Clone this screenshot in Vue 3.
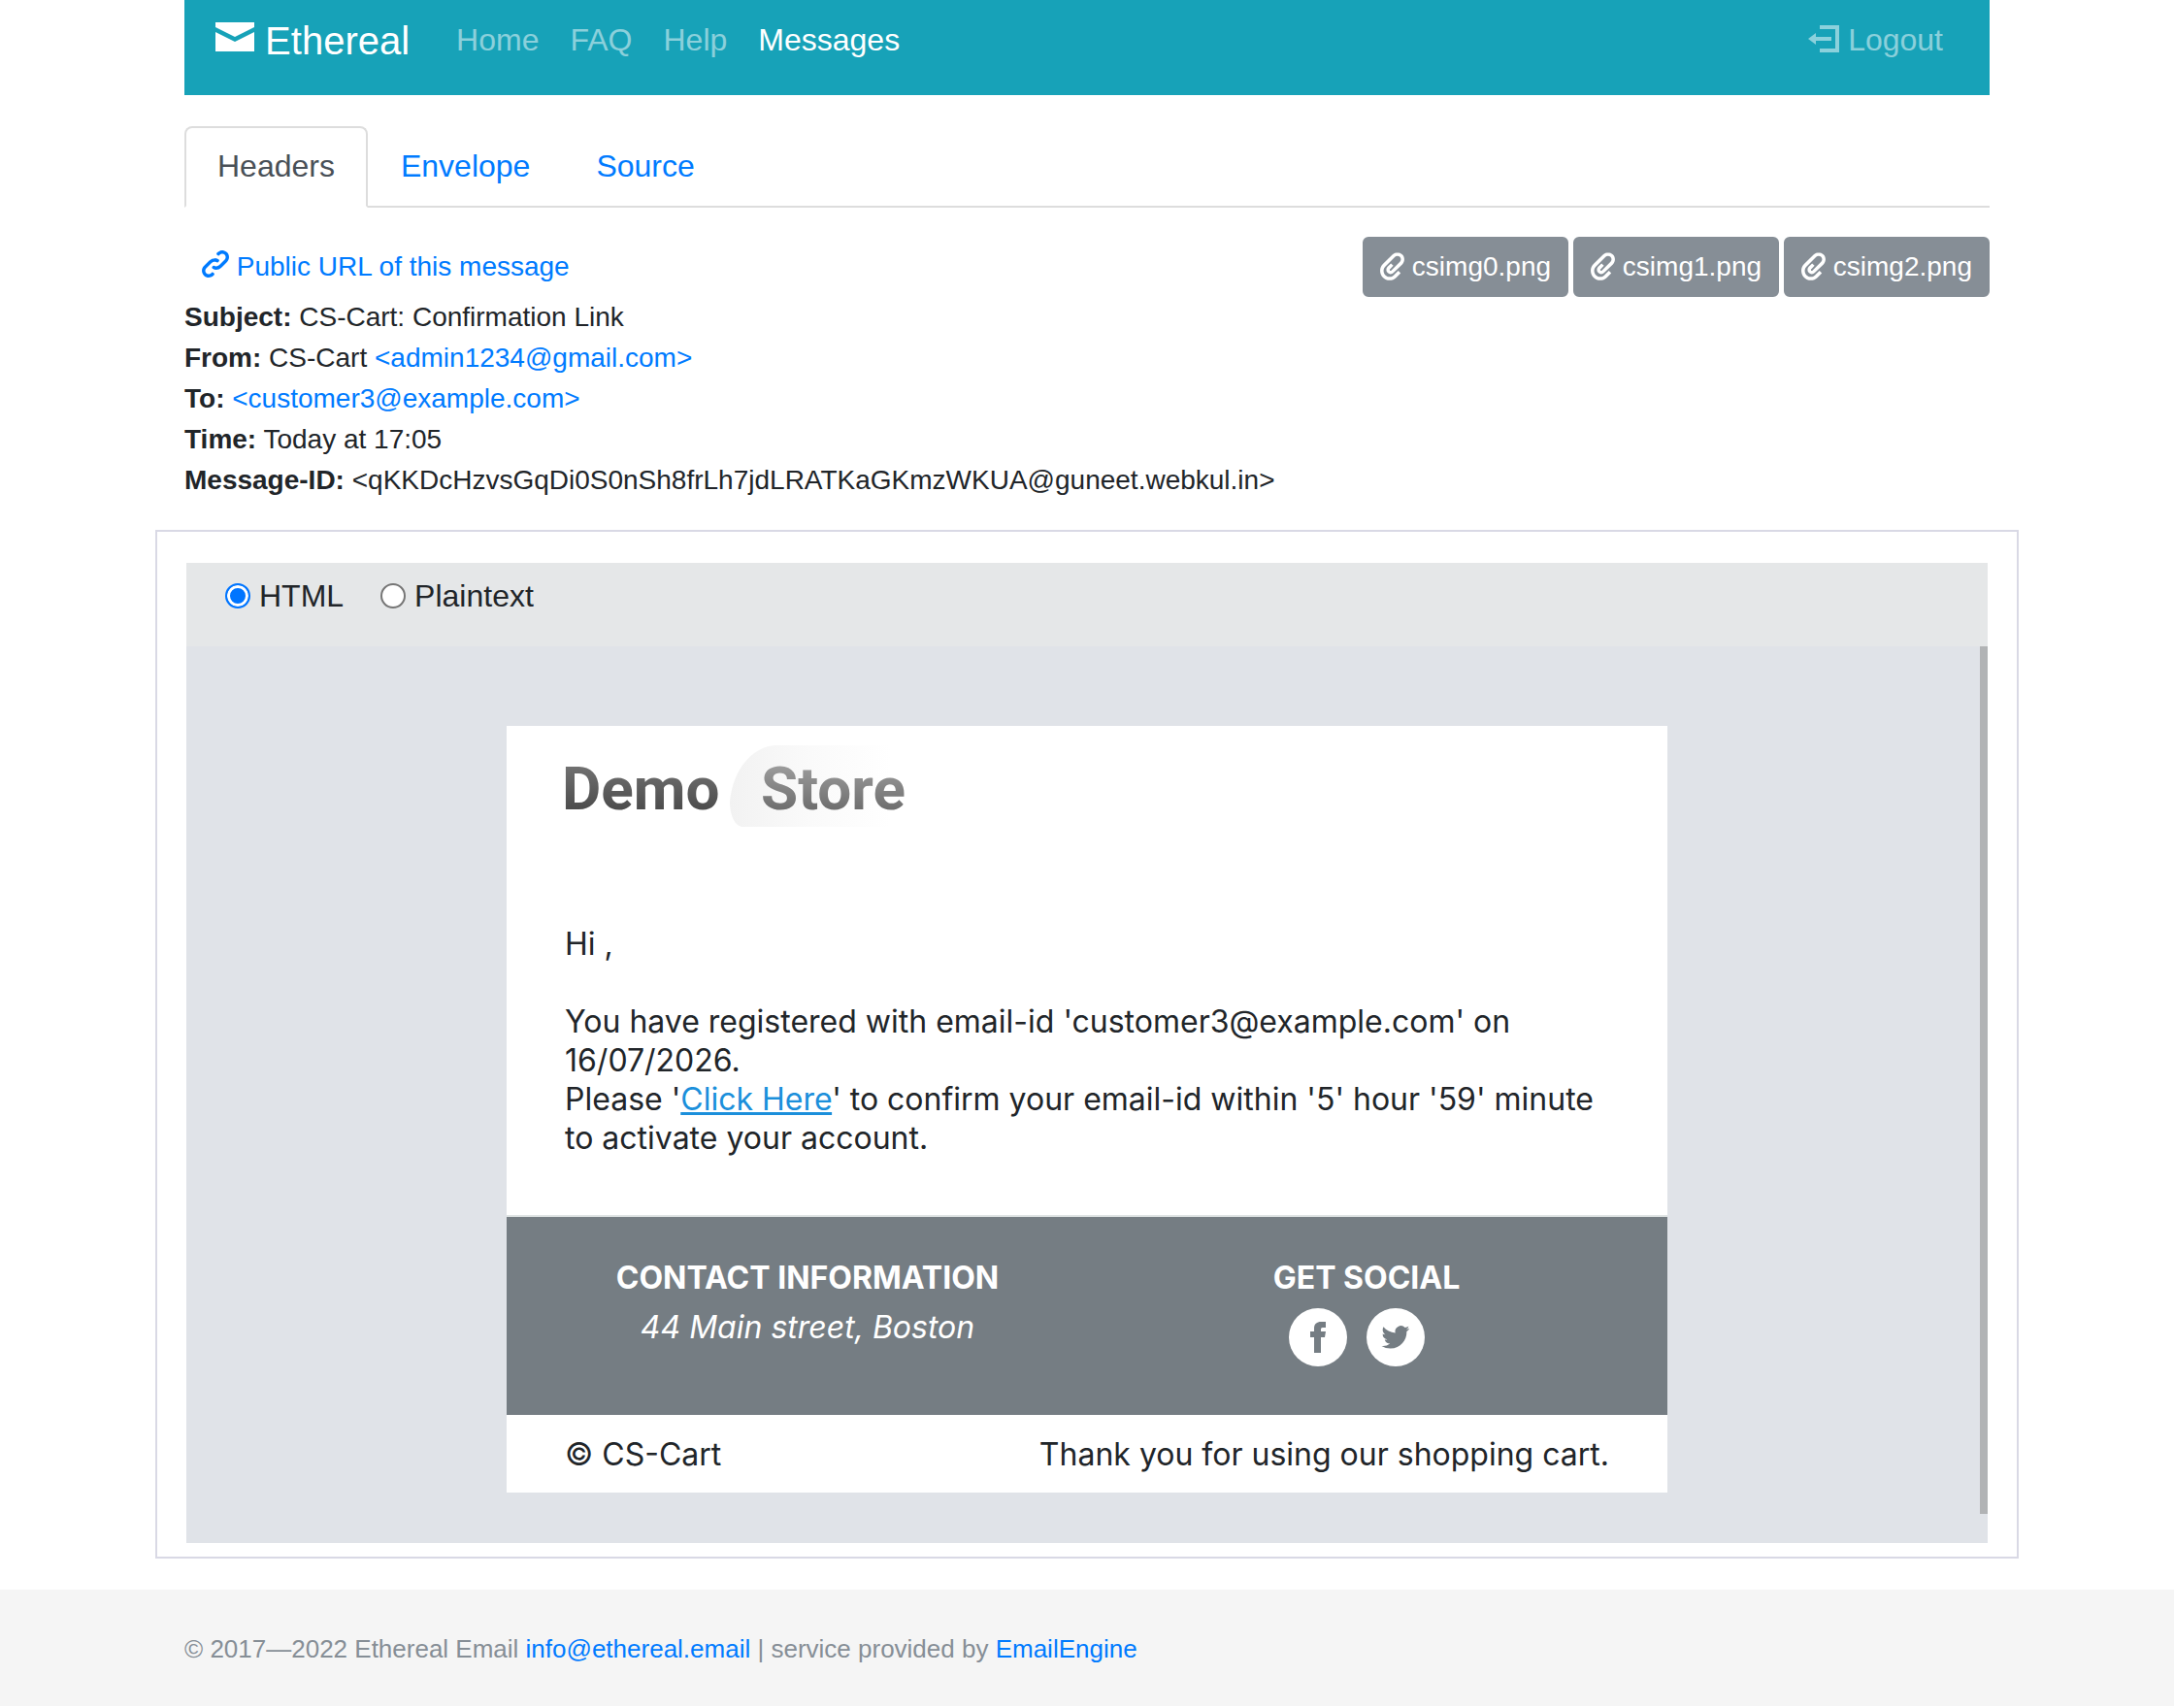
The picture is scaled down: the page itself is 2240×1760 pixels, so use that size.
<template>
  <div class="page">
    <div class="container">
      <nav class="navbar">
        <a class="brand" href="#">
          <svg class="icon" viewBox="0 0 8 8" aria-hidden="true"><path d="M0 1v1l4 2 4-2v-1h-8zm0 2v4h8v-4l-4 2-4-2z" /></svg>
          Ethereal
        </a>
        <a v-for="item in navItems" :key="item" href="#" class="nav-link" :class="{ active: item === 'Messages' }">{{ item }}</a>
        <a href="#" class="nav-link logout">
          <svg class="icon" viewBox="0 0 8 8" aria-hidden="true"><path d="M3 1v1h4v5h-4v1h5v-7h-5zm-1 2l-2 1.5 2 1.5v-1h4v-1h-4v-1z" /></svg>
          Logout
        </a>
      </nav>

      <div class="tabs">
        <a
          v-for="tab in tabs"
          :key="tab"
          href="#"
          class="tab"
          :class="{ active: tab === activeTab }"
          @click.prevent="activeTab = tab"
        >{{ tab }}</a>
      </div>

      <div class="toolbar">
        <a href="#" class="btn btn-link">
          <svg class="icon" viewBox="0 0 8 8" aria-hidden="true"><path d="M5.88.03c-.18.01-.36.03-.53.09-.27.1-.53.25-.75.47a.5.5 0 1 0 .69.69c.11-.11.24-.17.38-.22.35-.12.78-.07 1.06.22.39.39.39 1.04 0 1.44l-1.5 1.5c-.44.44-.8.48-1.06.47-.26-.01-.41-.13-.41-.13a.5.5 0 1 0-.5.88s.34.22.84.25c.5.03 1.2-.16 1.81-.78l1.5-1.5c.78-.78.78-2.04 0-2.81-.28-.28-.61-.45-.97-.53-.18-.04-.38-.04-.56-.03zm-2 2.31c-.5-.02-1.19.15-1.78.75l-1.5 1.5c-.78.78-.78 2.04 0 2.81.56.56 1.36.72 2.06.47.27-.1.53-.25.75-.47a.5.5 0 1 0-.69-.69c-.11.11-.24.17-.38.22-.35.12-.78.07-1.06-.22-.39-.39-.39-1.04 0-1.44l1.5-1.5c.4-.4.75-.45 1.03-.44.28.01.47.09.47.09a.5.5 0 1 0 .44-.88s-.34-.2-.84-.22z" /></svg>
          Public URL of this message
        </a>
        <div class="attachments">
          <button v-for="file in attachments" :key="file" type="button" class="btn btn-secondary">
            <svg class="icon clip" viewBox="0 0 7 8" aria-hidden="true"><path d="M5 0c-.51 0-1.02.21-1.41.59l-2.78 2.72c-1.07 1.07-1.07 2.8 0 3.88 1.07 1.07 2.8 1.07 3.88 0l1.25-1.25-.69-.69-1.16 1.13-.09.13c-.69.69-1.81.69-2.5 0-.68-.68-.66-1.78 0-2.47l2.78-2.75c.39-.39 1.04-.39 1.44 0 .39.39.37 1.01 0 1.41l-2.5 2.47c-.1.1-.27.1-.38 0-.1-.1-.1-.27 0-.38l.06-.03.91-.94-.69-.69-.97.97c-.48.48-.48 1.27 0 1.75s1.27.49 1.75 0l2.5-2.44c.78-.78.78-2.04 0-2.81-.39-.39-.89-.59-1.41-.59z" /></svg>
            {{ file }}
          </button>
        </div>
      </div>

      <div class="headers">
        <div v-for="row in headers" :key="row.name">
          <strong>{{ row.name }}:</strong> {{ row.value }}
          <a v-if="row.address" href="#">&lt;{{ row.address }}&gt;</a>
        </div>
      </div>
    </div>

    <div class="panel">
      <div class="view-switch">
        <label><input v-model="view" type="radio" name="view" value="html">HTML</label>
        <label><input v-model="view" type="radio" name="view" value="plain">Plaintext</label>
      </div>
      <div class="mail-frame">
        <div class="mail">
          <div class="mail-body">
            <svg class="logo" viewBox="0 0 356 86" role="img" aria-label="Demo Store">
              <defs>
                <linearGradient id="blob" x1="0" y1="0" x2="1" y2="0">
                  <stop offset="0" stop-color="#f2f2f2" />
                  <stop offset="0.5" stop-color="#fafafa" />
                  <stop offset="1" stop-color="#ffffff" />
                </linearGradient>
                <linearGradient id="dark" x1="0" y1="0" x2="0" y2="1">
                  <stop offset="0.2" stop-color="#707070" />
                  <stop offset="0.8" stop-color="#4c4c4c" />
                </linearGradient>
                <linearGradient id="light" x1="0" y1="0" x2="0" y2="1">
                  <stop offset="0.2" stop-color="#9a9a9a" />
                  <stop offset="0.8" stop-color="#6e6e6e" />
                </linearGradient>
              </defs>
              <path fill="url(#blob)" d="M216 0h120v84H184c-10 0-14-14-14-26 3-32 22-56 46-58z" />
              <text x="-3" y="66" fill="url(#dark)">Demo</text>
              <text x="202" y="66" fill="url(#light)">Store</text>
            </svg>
            <p>Hi ,</p>
            <p>
              You have registered with email-id 'customer3@example.com' on 16/07/2026.<br>
              Please '<a href="#">Click Here</a>' to confirm your email-id within '5' hour '59' minute to activate your account.
            </p>
          </div>
          <div class="mail-info">
            <div class="info-col">
              <h4>Contact information</h4>
              <address>44 Main street, Boston</address>
            </div>
            <div class="info-col">
              <h4>Get social</h4>
              <div class="social">
                <a href="#" aria-label="Facebook">
                  <svg viewBox="0 0 60 60"><circle cx="30" cy="30" r="30" fill="#fff" /><path d="M26 46V30h-4v-6h4v-3c0-5 3-7 7-7h5v6h-3c-2 0-2 1-2 2v2h5l-1 6h-4v16z" /></svg>
                </a>
                <a href="#" aria-label="Twitter">
                  <svg viewBox="0 0 60 60"><circle cx="30" cy="30" r="30" fill="#fff" /><path transform="translate(15.5 15.5) scale(1.2)" d="M23.95 4.57a10 10 0 0 1-2.82.77 4.96 4.96 0 0 0 2.16-2.72c-.95.55-2 .96-3.13 1.18a4.92 4.92 0 0 0-8.38 4.48C7.69 8.1 4.07 6.13 1.64 3.16a4.82 4.82 0 0 0-.67 2.48c0 1.71.87 3.21 2.19 4.1a4.9 4.9 0 0 1-2.23-.62v.06a4.92 4.92 0 0 0 3.95 4.83 5 5 0 0 1-2.21.08 4.94 4.94 0 0 0 4.6 3.42A9.87 9.87 0 0 1 0 19.54a13.99 13.99 0 0 0 7.56 2.21c9.05 0 14-7.5 14-13.98 0-.21 0-.42-.02-.63a9.94 9.94 0 0 0 2.46-2.55z" /></svg>
                </a>
              </div>
            </div>
          </div>
          <div class="mail-bottom">
            <span>© CS-Cart</span>
            <span>Thank you for using our shopping cart.</span>
          </div>
        </div>
        <div class="scrollbar"></div>
      </div>
    </div>

    <footer class="footer">
      <div class="container">
        © 2017—2022 Ethereal Email <a href="#">info@ethereal.email</a> | service provided by <a href="#">EmailEngine</a>
      </div>
    </footer>
  </div>
</template>

<script setup>
import { ref } from 'vue';

const navItems = ['Home', 'FAQ', 'Help', 'Messages'];
const tabs = ['Headers', 'Envelope', 'Source'];
const attachments = ['csimg0.png', 'csimg1.png', 'csimg2.png'];

const headers = [
  { name: 'Subject', value: 'CS-Cart: Confirmation Link' },
  { name: 'From', value: 'CS-Cart', address: 'admin1234@gmail.com' },
  { name: 'To', value: '', address: 'customer3@example.com' },
  { name: 'Time', value: 'Today at 17:05' },
  { name: 'Message-ID', value: '<qKKDcHzvsGqDi0S0nSh8frLh7jdLRATKaGKmzWKUA@guneet.webkul.in>' },
];

const activeTab = ref('Headers');
const view = ref('html');
</script>

<style>
body {
  margin: 0;
  background: #ffffff;
}
</style>

<style scoped>
.page {
  font-family: "Liberation Sans", Arial, sans-serif;
  font-size: 32px;
  line-height: 48px;
  color: #212529;
}

.page * {
  box-sizing: border-box;
}

a {
  color: #007bff;
  text-decoration: none;
}

.container {
  max-width: 1920px;
  margin: 0 auto;
  padding: 0 30px;
}

.icon {
  width: 1em;
  height: 1em;
  fill: currentColor;
  vertical-align: -2px;
}

.icon.clip {
  width: 25px;
  height: 29px;
  vertical-align: -5px;
}

/* navbar */
.navbar {
  display: flex;
  align-items: center;
  gap: 32px;
  padding: 12px 48px 26px 32px;
  background: #17a2b8;
}

.brand {
  margin-right: 16px;
  font-size: 40px;
  line-height: 60px;
  color: #ffffff;
}

.nav-link {
  padding-bottom: 2px;
  color: rgba(255, 255, 255, 0.5);
}

.nav-link.active {
  color: #ffffff;
}

.logout {
  margin-left: auto;
}

/* tabs */
.tabs {
  display: flex;
  margin-top: 32px;
  border-bottom: 2px solid #dddddd;
}

.tab {
  margin-bottom: -2px;
  padding: 15px 32px 17px;
  border: 2px solid transparent;
  border-radius: 8px 8px 0 0;
}

.tab.active {
  color: #495057;
  background: #ffffff;
  border-color: #dddddd #dddddd #ffffff;
}

/* message headers */
.toolbar {
  display: flex;
  justify-content: space-between;
  margin-top: 30px;
}

.attachments {
  display: flex;
  gap: 5px;
}

.btn {
  padding: 8px 16px;
  border: 2px solid transparent;
  border-radius: 6px;
  font-family: inherit;
  font-size: 28px;
  line-height: 42px;
}

.btn-secondary {
  color: #ffffff;
  background: #868e96;
  border-color: #868e96;
  cursor: pointer;
}

.headers {
  font-size: 28px;
  line-height: 42px;
}

/* message preview */
.panel {
  max-width: 1920px;
  margin: 30px auto 32px;
  padding: 32px 30px 14px;
  border: 2px solid #d9d9e5;
}

.view-switch {
  display: flex;
  gap: 38px;
  padding: 10px 40px 28px;
  background: #e5e7e8;
}

.view-switch label {
  display: flex;
  align-items: center;
  gap: 9px;
}

.view-switch input {
  appearance: none;
  width: 26px;
  height: 26px;
  margin: 0;
  border: 2px solid #767676;
  border-radius: 50%;
  background: #ffffff;
}

.view-switch input:checked {
  border-color: #0075ff;
  background: #0075ff;
  box-shadow: inset 0 0 0 3px #ffffff;
}

.mail-frame {
  position: relative;
  padding: 82px 0 52px;
  background: #e0e3e8;
}

.scrollbar {
  position: absolute;
  top: 0;
  right: 0;
  bottom: 30px;
  width: 8px;
  background: #b1b3b5;
}

.mail {
  max-width: 1196px;
  margin: 0 auto;
  background: #ffffff;
  font-family: Inter, sans-serif;
  font-optical-sizing: none;
  line-height: 40px;
}

.mail-body {
  padding: 20px 60px 59px;
  border-bottom: 2px solid #dfe4e4;
}

.mail-body p {
  margin: 0 0 40px;
}

.mail-body p:last-child {
  margin-bottom: 0;
}

.mail-body a {
  color: #1b8fdb;
  text-decoration: underline;
}

.logo {
  display: block;
  width: 356px;
  height: 86px;
  margin-bottom: 99px;
  overflow: visible;
  font-family: Roboto, sans-serif;
  font-size: 62px;
  font-weight: 700;
}

.mail-info {
  display: flex;
  gap: 76px;
  padding: 43px 60px 50px;
  background: #757d83;
  color: #ffffff;
  text-align: center;
}

.info-col {
  flex: 1;
}

.info-col h4 {
  margin: 0 0 11px;
  font-size: 32px;
  font-weight: 700;
  text-transform: uppercase;
}

.social {
  display: flex;
  justify-content: center;
}

.social a {
  margin-right: 20px;
}

.social svg {
  display: block;
  width: 60px;
  height: 60px;
  fill: #757d83;
}

.mail-bottom {
  display: flex;
  justify-content: space-between;
  padding: 21px 60px 19px;
}

/* footer */
.footer {
  padding: 43px 0 41px;
  background: #f5f5f5;
  color: #868e96;
  font-size: 26px;
  line-height: 36px;
}
</style>
